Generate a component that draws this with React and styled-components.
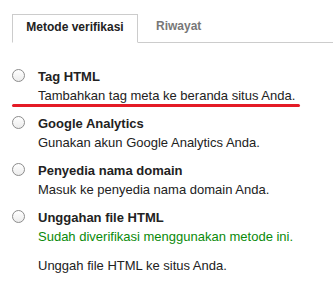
import React from "react"
import styled, { createGlobalStyle } from "styled-components";

const GlobalStyle = createGlobalStyle`
body {
  margin: 0;
  background: #fff;
  font-family: "Liberation Sans", Arial, sans-serif;
  color: #222;
}
`

const methods = [
  { id: "meta", title: "Tag HTML", desc: "Tambahkan tag meta ke beranda situs Anda.", marked: true },
  { id: "ga", title: "Google Analytics", desc: "Gunakan akun Google Analytics Anda." },
  { id: "dns", title: "Penyedia nama domain", desc: "Masuk ke penyedia nama domain Anda." },
  {
    id: "file",
    title: "Unggahan file HTML",
    status: "Sudah diverifikasi menggunakan metode ini.",
    desc: "Unggah file HTML ke situs Anda.",
  },
];

function App() {
  return (
    <Page>
      <GlobalStyle />
      <TabBar>
        <ActiveTab>Metode verifikasi</ActiveTab>
        <Tab>Riwayat</Tab>
      </TabBar>

      <MethodList>
        {methods.map((m) => (
          <Method key={m.id}>
            <Radio />
            <div>
              <Title>{m.title}</Title>
              {m.status ? (
                <>
                  <Status>{m.status}</Status>
                  <Desc $spaced>{m.desc}</Desc>
                </>
              ) : (
                <Desc>{m.desc}</Desc>
              )}
            </div>
            {m.marked && <Underline />}
          </Method>
        ))}
      </MethodList>
    </Page>
  )
}

export default App;

const Page = styled.div`
padding: 14px 0 0 12px;
`

const TabBar = styled.div`
display: flex;
align-items: flex-start;
height: 28px;
border-bottom: 1px solid #ccc;
`

const Tab = styled.div`
height: 28px;
line-height: 25px;
padding-left: 18px;
font-size: 12px;
font-weight: bold;
color: #777;
`

const ActiveTab = styled.div`
box-sizing: content-box;
width: 124px;
height: 27px;
line-height: 24px;
text-align: center;
font-size: 12px;
font-weight: bold;
color: #222;
background: #fff;
border: 1px solid #ccc;
border-bottom-color: #fff;
`

const MethodList = styled.div`
margin-top: 25px;
`

const Method = styled.div`
position: relative;
display: grid;
grid-template-columns: 26px 1fr;
margin-bottom: 10px;
font-size: 13px;
line-height: 18.5px;
`

const Radio = styled.span`
width: 11px;
height: 11px;
margin-top: 1px;
border: 1px solid #8c8c8c;
border-radius: 50%;
background: linear-gradient(#fff, #ececec);
`

const Title = styled.div`
font-weight: bold;
color: #222;
`

const Desc = styled.div`
color: #222;
margin-top: ${(p) => (p.$spaced ? "10.5px" : "0")};
`

const Status = styled.div`
color: #0a8a0a;
`

const Underline = styled.span`
position: absolute;
left: 0;
top: 36px;
width: 288px;
height: 3px;
border-radius: 2px;
background: #e41b26;
`
